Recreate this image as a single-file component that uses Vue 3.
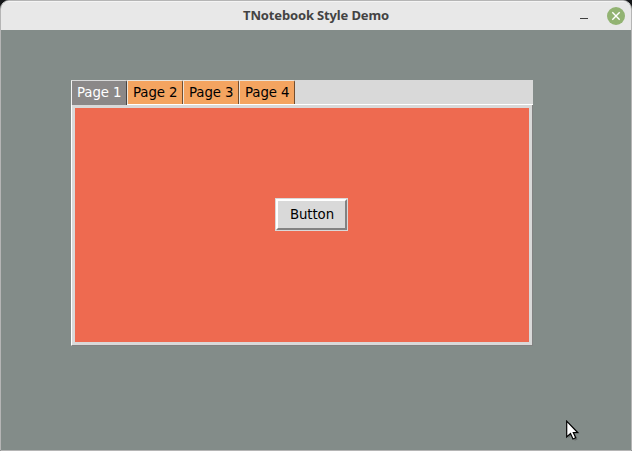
<script setup>
import { ref } from 'vue'
const tabs = ['Page 1', 'Page 2', 'Page 3', 'Page 4']
const active = ref(0)
</script>

<template>
  <div class="desktop">
    <div class="window">
      <header class="titlebar">
        <span class="title">TNotebook Style Demo</span>
        <span class="minimize"></span>
        <svg class="close" width="18" height="18" viewBox="0 0 18 18">
          <circle cx="9" cy="9" r="9" fill="#92b372" />
          <path d="M5.3 5.3L12.7 12.7M12.7 5.3L5.3 12.7" stroke="#fff" stroke-width="1.4" />
        </svg>
      </header>
      <main class="content">
        <section class="notebook">
          <nav class="tabs">
            <div v-for="(tab, i) in tabs" :key="tab" class="tab" :class="{ active: i === active }" @click="active = i">{{ tab }}</div>
          </nav>
          <div class="pane">
            <div class="page"><button class="push">Button</button></div>
          </div>
        </section>
      </main>
    </div>
    <svg class="cursor" width="16" height="22" viewBox="0 0 16 22">
      <path d="M1.5 1.5V17L5 13.8L7.8 19.8L10.5 18.4L8 12.8H12.5Z" fill="#333" opacity=".35" transform="translate(1 1)" />
      <path d="M.7 1.2V17L4.5 13.5L7 19L9.7 17.8L7.3 12.5H11.6Z" fill="#fff" stroke="#000" stroke-width="1.2" />
    </svg>
  </div>
</template>

<style>
body { margin: 0; background: #151719; overflow: hidden; }
</style>

<style scoped>
.desktop { position: relative; width: 632px; height: 451px; }
.window {
  box-sizing: border-box; width: 632px; height: 451px; overflow: hidden;
  border: 1px solid #b5b5b5; border-radius: 9px 9px 0 0;
  background: #838c89; display: flex; flex-direction: column;
}
.titlebar {
  box-sizing: border-box; height: 29px; flex: none; background: #e8e8e8; border-top: 1px solid #f4f4f4;
  display: grid; grid-template-columns: 1fr auto 1fr; align-items: center; padding: 0 6px;
}
.title {
  grid-column: 2; grid-row: 1; font: 700 13px/20px "Noto Sans", sans-serif; letter-spacing: -0.15px;
  color: #434343; white-space: nowrap; margin-bottom: 2px;
}
.minimize { grid-column: 3; grid-row: 1; justify-self: end; width: 8px; height: 1px; background: #404040; margin: 4px 37px 0 0; }
.close { grid-column: 3; grid-row: 1; justify-self: end; }
.content { flex: 1; padding: 50px 0 0 70px; }
.notebook { width: 462px; height: 266px; display: flex; flex-direction: column; }
.tabs { height: 25px; box-sizing: border-box; background: #d9d9d9; border-bottom: 1px solid #fff; display: flex; flex: none; }
.tab {
  box-sizing: border-box; width: 56px; height: 24px; background: #f4a460; color: #000;
  border: 1px solid #ece5dc; border-right-color: #744e2e; border-bottom: 0; border-top-right-radius: 2px;
  font: 13.33px/24px "DejaVu Sans", sans-serif; letter-spacing: -0.1px; text-indent: 5px; white-space: nowrap;
}
.tab.active { height: 25px; background: #8b8888; color: #fff; border-color: #d9d9d9 #484646 #d9d9d9 #f4f4f4; }
.pane {
  box-sizing: border-box; flex: 1; background: #d9d9d9; padding: 3px;
  border: solid; border-width: 0 1px 1px; border-color: #fff #828282 #828282 #fff; display: flex;
}
.page { flex: 1; background: #ee6a50; display: flex; justify-content: center; align-items: flex-start; padding: 90px 0 0 19px; }
.push {
  box-sizing: border-box; width: 73px; height: 33px; padding: 0 0 0 1px; margin: 0; border-radius: 0;
  background: #d9d9d9; border: 3px solid; border-color: #fff #828282 #828282 #fff;
  outline: 1px solid #d9d9d9; outline-offset: -1px;
  font: 13.33px/27px "DejaVu Sans", sans-serif; letter-spacing: -0.1px; color: #000;
}
.cursor { position: absolute; left: 566px; top: 420px; }
</style>
